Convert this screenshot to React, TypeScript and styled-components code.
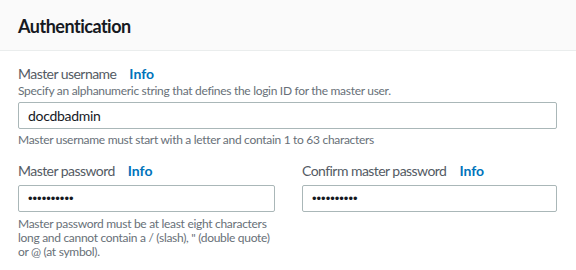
import React from 'react';
import styled, { createGlobalStyle } from 'styled-components';

const GlobalStyle = createGlobalStyle`
  html, body {
    margin: 0;
    padding: 0;
    background: #ffffff;
  }
  body {
    font-family: Lato, 'Open Sans', Arial, sans-serif;
    color: #16191f;
  }
`;

const Panel = styled.section`
  width: 576px;
  height: 270px;
  overflow: hidden;
  background: #ffffff;
`;

const Header = styled.header`
  height: 51px;
  box-sizing: border-box;
  background: #fafafa;
  border-bottom: 1px solid #eaeded;
  padding: 2px 18px 0;
  display: flex;
  align-items: center;

  h2 {
    margin: 0;
    font-size: 18px;
    font-weight: 700;
    letter-spacing: -0.5px;
    color: #16191f;
  }
`;

const Body = styled.div`
  padding: 13px 19px 0 18px;
  display: flex;
  flex-direction: column;
  gap: 14px;
`;

const Row = styled.div`
  display: grid;
  grid-template-columns: 257px 255px;
  column-gap: 27px;
`;

const Field = styled.div`
  display: flex;
  flex-direction: column;
`;

const Label = styled.label`
  font-size: 14px;
  line-height: 20px;
  letter-spacing: -0.55px;
  color: #545b64;
  display: flex;
  gap: 13px;
`;

const InfoLink = styled.a`
  color: #0073bb;
  font-weight: 700;
  letter-spacing: 0;
  text-decoration: none;
`;

const Hint = styled.div<{ $top?: number }>`
  font-size: 12px;
  line-height: 14px;
  letter-spacing: -0.3px;
  color: #687078;
  margin-top: ${(p) => p.$top ?? 0}px;
`;

const Input = styled.input<{ $secret?: boolean }>`
  box-sizing: border-box;
  width: 100%;
  height: 27px;
  margin-top: 4px;
  padding: 0 9px;
  border: 1px solid #aab7b8;
  border-radius: 2px;
  font-family: ${(p) => (p.$secret ? "'Liberation Sans', Arial, sans-serif" : 'inherit')};
  font-size: ${(p) => (p.$secret ? 13 : 14)}px;
  letter-spacing: ${(p) => (p.$secret ? 0 : -0.3)}px;
  color: #16191f;
  background: #ffffff;
  outline: none;
`;

const FieldBlock: React.FC<{
  label: string;
  hint?: string;
  note?: string;
  value: string;
  secret?: boolean;
}> = ({ label, hint, note, value, secret }) => (
  <Field>
    <Label>
      {label}
      <InfoLink href="#">Info</InfoLink>
    </Label>
    {hint && <Hint>{hint}</Hint>}
    <Input
      type={secret ? 'password' : 'text'}
      defaultValue={value}
      $secret={secret}
      readOnly
    />
    {note && <Hint $top={secret ? 5 : 4}>{note}</Hint>}
  </Field>
);

const App: React.FC = () => (
  <>
    <GlobalStyle />
    <Panel>
      <Header>
        <h2>Authentication</h2>
      </Header>
      <Body>
        <FieldBlock
          label="Master username"
          hint="Specify an alphanumeric string that defines the login ID for the master user."
          value="docdbadmin"
          note="Master username must start with a letter and contain 1 to 63 characters"
        />
        <Row>
          <FieldBlock
            label="Master password"
            value="••••••••••"
            secret
            note='Master password must be at least eight characters long and cannot contain a / (slash), " (double quote) or @ (at symbol).'
          />
          <FieldBlock label="Confirm master password" value="••••••••••" secret />
        </Row>
      </Body>
    </Panel>
  </>
);

export default App;
